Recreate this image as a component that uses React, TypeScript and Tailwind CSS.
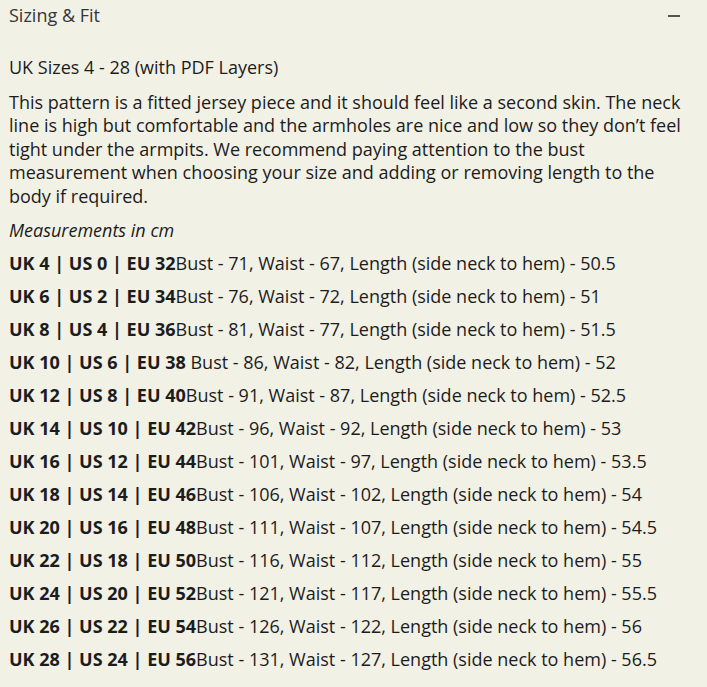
const rows: [string, string][] = [
  ["UK 4 | US 0 | EU 32", "Bust - 71, Waist - 67, Length (side neck to hem) - 50.5"],
  ["UK 6 | US 2 | EU 34", "Bust - 76, Waist - 72, Length (side neck to hem) - 51"],
  ["UK 8 | US 4 | EU 36", "Bust - 81, Waist - 77, Length (side neck to hem) - 51.5"],
  ["UK 10 | US 6 | EU 38", " Bust - 86, Waist - 82, Length (side neck to hem) - 52"],
  ["UK 12 | US 8 | EU 40", "Bust - 91, Waist - 87, Length (side neck to hem) - 52.5"],
  ["UK 14 | US 10 | EU 42", "Bust - 96, Waist - 92, Length (side neck to hem) - 53"],
  ["UK 16 | US 12 | EU 44", "Bust - 101, Waist - 97, Length (side neck to hem) - 53.5"],
  ["UK 18 | US 14 | EU 46", "Bust - 106, Waist - 102, Length (side neck to hem) - 54"],
  ["UK 20 | US 16 | EU 48", "Bust - 111, Waist - 107, Length (side neck to hem) - 54.5"],
  ["UK 22 | US 18 | EU 50", "Bust - 116, Waist - 112, Length (side neck to hem) - 55"],
  ["UK 24 | US 20 | EU 52", "Bust - 121, Waist - 117, Length (side neck to hem) - 55.5"],
  ["UK 26 | US 22 | EU 54", "Bust - 126, Waist - 122, Length (side neck to hem) - 56"],
  ["UK 28 | US 24 | EU 56", "Bust - 131, Waist - 127, Length (side neck to hem) - 56.5"],
];

export default function App() {
  return (
    <div className="min-h-[687px] bg-[#f2f1e6] px-[9px] text-[#1c1c1c] font-['Open_Sans',sans-serif] text-[18px]">
      {/* accordion header */}
      <div className="flex h-[31px] items-center justify-between">
        <span className="text-[#363636] leading-[23.5px]">Sizing &amp; Fit</span>
        <span className="mr-[18px] block h-[2px] w-[12px] bg-[#555]" />
      </div>

      {/* body */}
      <div className="pt-[25px] leading-[23.5px]">
        <p>UK Sizes 4 - 28 (with PDF Layers)</p>
        <p className="mt-[11px]">
          This pattern is a fitted jersey piece and it should feel like a second skin. The neck
          <br />
          line is high but comfortable and the armholes are nice and low so they don’t feel
          <br />
          tight under the armpits. We recommend paying attention to the bust
          <br />
          measurement when choosing your size and adding or removing length to the
          <br />
          body if required.
        </p>
        <p className="mt-[11px] italic">Measurements in cm</p>
        <div className="mt-[9.5px] flex flex-col gap-[9.5px]">
          {rows.map(([size, m]) => (
            <p key={size} className="whitespace-pre">
              <strong className="font-bold">{size}</strong>
              {m}
            </p>
          ))}
        </div>
      </div>
    </div>
  );
}
